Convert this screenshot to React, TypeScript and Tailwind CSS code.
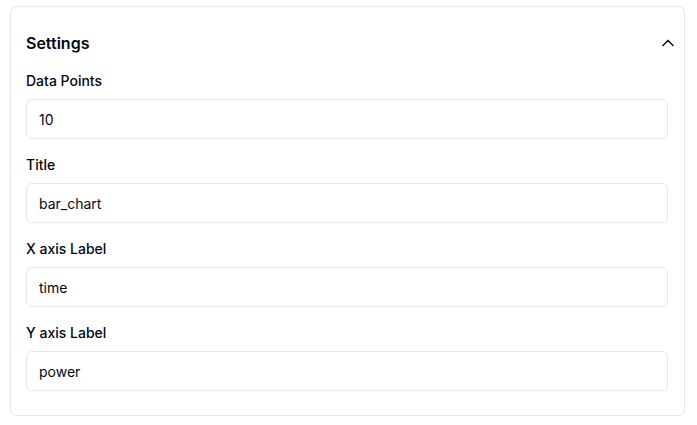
import { ChevronUp } from 'lucide-react';

const fields = [
  { label: 'Data Points', value: '10' },
  { label: 'Title', value: 'bar_chart' },
  { label: 'X axis Label', value: 'time' },
  { label: 'Y axis Label', value: 'power' },
];

export default function App() {
  return (
    <div className="min-h-screen bg-white font-['Inter',sans-serif] text-gray-950">
      <div className="ml-[10px] mt-[6px] w-[675px] rounded-md border border-gray-200 pl-[15px] pr-4 pt-6 pb-6">
        {/* Header */}
        <div className="flex h-6 items-center justify-between">
          <h2 className="text-base font-semibold leading-6">Settings</h2>
          <button className="-mr-[10px] flex h-5 w-5 items-center justify-center text-gray-900">
            <ChevronUp className="h-5 w-5" strokeWidth={2} />
          </button>
        </div>

        {/* Fields */}
        <div className="mt-4 flex flex-col gap-4">
          {fields.map((f) => (
            <div key={f.label}>
              <label className="mb-2 block text-sm font-medium leading-5">{f.label}</label>
              <input
                className="h-10 w-full rounded-md border border-gray-200 px-3 text-sm text-gray-950 outline-none"
                defaultValue={f.value}
              />
            </div>
          ))}
        </div>
      </div>
    </div>
  );
}
